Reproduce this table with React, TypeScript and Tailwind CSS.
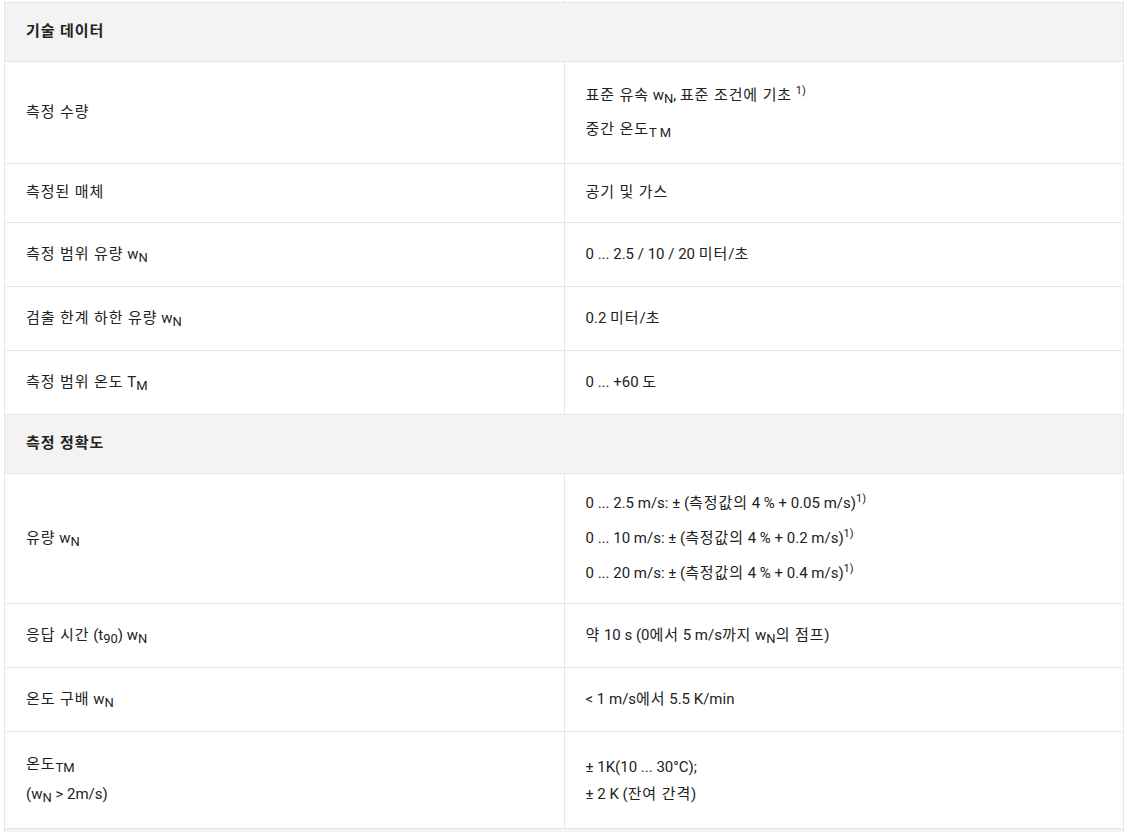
const font = "font-['Roboto','Noto_Sans_CJK_KR',sans-serif]";

type Row =
  | { kind: "head"; title: string; h: string }
  | { kind: "data"; h: string; left: React.ReactNode; right: React.ReactNode };

const Sub = ({ children }: { children: React.ReactNode }) => (
  <sub className="text-[13px] leading-none">{children}</sub>
);
const Sup = ({ children }: { children: React.ReactNode }) => (
  <sup className="text-[11px] leading-none">{children}</sup>
);
const WN = () => (
  <>
    w<Sub>N</Sub>
  </>
);

// Korean runs render a bit wider in the original; a little tracking makes up for it
const Ko = ({ children }: { children: React.ReactNode }) => (
  <span className="tracking-[0.9px]">{children}</span>
);

const rows: Row[] = [
  { kind: "head", title: "기술 데이터", h: "h-[59px]" },
  {
    kind: "data",
    h: "h-[102px]",
    left: <Ko>측정 수량</Ko>,
    right: (
      <div className="flex flex-col gap-[13px]">
        <p>
          <Ko>표준 유속</Ko> <WN />, <Ko>표준 조건에 기초</Ko> <Sup>1)</Sup>
        </p>
        <p>
          <Ko>중간 온도</Ko>
          <Sub>T M</Sub>
        </p>
      </div>
    ),
  },
  { kind: "data", h: "h-[59px]", left: <Ko>측정된 매체</Ko>, right: <Ko>공기 및 가스</Ko> },
  {
    kind: "data",
    h: "h-[64px]",
    left: (
      <>
        <Ko>측정 범위 유량</Ko> <WN />
      </>
    ),
    right: (
      <>
        0 ... 2.5 / 10 / 20 <Ko>미터</Ko>/<Ko>초</Ko>
      </>
    ),
  },
  {
    kind: "data",
    h: "h-[64px]",
    left: (
      <>
        <Ko>검출 한계 하한 유량</Ko> <WN />
      </>
    ),
    right: (
      <>
        0.2 <Ko>미터</Ko>/<Ko>초</Ko>
      </>
    ),
  },
  {
    kind: "data",
    h: "h-[64px]",
    left: (
      <>
        <Ko>측정 범위 온도</Ko> T<Sub>M</Sub>
      </>
    ),
    right: (
      <>
        0 ... +60 <Ko>도</Ko>
      </>
    ),
  },
  { kind: "head", title: "측정 정확도", h: "h-[59px]" },
  {
    kind: "data",
    h: "h-[130px]",
    left: (
      <>
        <Ko>유량</Ko> <WN />
      </>
    ),
    right: (
      <div className="flex flex-col gap-[14px]">
        <p>
          0 ... 2.5 m/s: ± (<Ko>측정값의</Ko> 4 % + 0.05 m/s)<Sup>1)</Sup>
        </p>
        <p>
          0 ... 10 m/s: ± (<Ko>측정값의</Ko> 4 % + 0.2 m/s)<Sup>1)</Sup>
        </p>
        <p>
          0 ... 20 m/s: ± (<Ko>측정값의</Ko> 4 % + 0.4 m/s)<Sup>1)</Sup>
        </p>
      </div>
    ),
  },
  {
    kind: "data",
    h: "h-[64px]",
    left: (
      <>
        <Ko>응답 시간</Ko> (t<Sub>90</Sub>) <WN />
      </>
    ),
    right: (
      <>
        <Ko>약</Ko> 10 s (0<Ko>에서</Ko> 5 m/s<Ko>까지</Ko> <WN />
        <Ko>의 점프</Ko>)
      </>
    ),
  },
  {
    kind: "data",
    h: "h-[64px]",
    left: (
      <>
        <Ko>온도 구배</Ko> <WN />
      </>
    ),
    right: (
      <>
        &lt; 1 m/s<Ko>에서</Ko> 5.5 K/min
      </>
    ),
  },
  {
    kind: "data",
    h: "h-[97px]",
    left: (
      <div className="flex flex-col gap-[9px]">
        <p>
          <Ko>온도</Ko>
          <Sub>TM</Sub>
        </p>
        <p>
          (<WN /> &gt; 2m/s)
        </p>
      </div>
    ),
    right: (
      <div className="flex flex-col gap-[6px] pt-[3px]">
        <p>± 1K(10 ... 30°C);</p>
        <p>
          ± 2 K (<Ko>잔여 간격</Ko>)
        </p>
      </div>
    ),
  },
  { kind: "head", title: "", h: "h-[59px]" },
];

const cell = "border border-[#e6e6e6] px-[21px] align-middle";

export default function App() {
  return (
    <div className={`min-h-screen bg-white ${font} text-[15px] leading-[21px] text-[#222]`}>
      <table className="ml-[4px] w-[1120px] table-fixed border-collapse">
        <tbody>
          <tr className="h-[2px]">
            <td className="border-x border-[#e6e6e6] p-0" />
            <td className="border-x border-[#e6e6e6] p-0" />
          </tr>
          {rows.map((r, i) =>
            r.kind === "head" ? (
              <tr key={i} className={r.h}>
                <td colSpan={2} className={`${cell} bg-[#f3f3f3] font-semibold`}>
                  <Ko>{r.title}</Ko>
                </td>
              </tr>
            ) : (
              <tr key={i} className={r.h}>
                <td className={cell}>{r.left}</td>
                <td className={cell}>{r.right}</td>
              </tr>
            )
          )}
        </tbody>
      </table>
    </div>
  );
}
